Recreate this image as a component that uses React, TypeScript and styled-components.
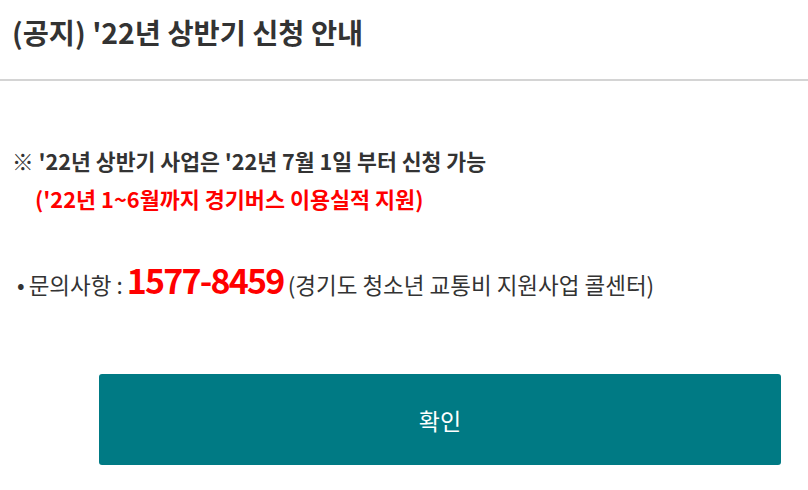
import React from "react";
import styled, { createGlobalStyle } from "styled-components";

const Global = createGlobalStyle`
  html, body { margin: 0; padding: 0; background: #fff; }
  body { font-family: "Noto Sans CJK KR", "Noto Sans", sans-serif; color: #333; }
`;

const Page = styled.div`
  width: 808px;
  height: 490px;
  display: flex;
  flex-direction: column;
`;

const Header = styled.header`
  height: 81px;
  padding: 0 12px;
  display: flex;
  align-items: flex-start;
  border-bottom: 2px solid #d4d4d4;
  box-sizing: border-box;
`;

const Title = styled.h1`
  margin: 12px 0 0;
  font-size: 28.4px;
  font-weight: 700;
  line-height: 40px;
  color: #333;
`;

const Body = styled.div`
  padding: 65px 12px 0;
  display: flex;
  flex-direction: column;
`;

const Notice = styled.p`
  margin: 0;
  font-size: 21.6px;
  font-weight: 700;
  line-height: 30px;
  color: #333;
`;

const Sub = styled.p`
  margin: 8px 0 0 23px;
  font-size: 21.8px;
  font-weight: 700;
  line-height: 30px;
  color: #ff0000;
`;

const Contact = styled.div`
  margin-top: 41px;
  display: flex;
  align-items: baseline;
  font-size: 22.5px;
  color: #333;
  white-space: nowrap;
`;

const Bullet = styled.span`
  margin: 0 4px 0 5px;
`;

const Phone = styled.strong`
  font-size: 34px;
  font-weight: 700;
  color: #ff0000;
  letter-spacing: -1.8px;
  margin: 0 4px 0 4px;
`;

const Footer = styled.div`
  margin-top: auto;
  padding: 0 27px 25px 99px;
  display: flex;
`;

const ConfirmButton = styled.button`
  flex: 1;
  height: 91px;
  border: none;
  border-radius: 3px;
  background: #007a84;
  color: #fff;
  font-family: "Noto Sans CJK KR", sans-serif;
  font-size: 23px;
  cursor: pointer;
`;

export default function App() {
  return (
    <Page>
      <Global />
      <Header>
        <Title>(공지) '22년 상반기 신청 안내</Title>
      </Header>
      <Body>
        <Notice>※ '22년 상반기 사업은 '22년 7월 1일 부터 신청 가능</Notice>
        <Sub>('22년 1~6월까지 경기버스 이용실적 지원)</Sub>
        <Contact>
          <Bullet>•</Bullet>
          문의사항 :
          <Phone>1577-8459</Phone>
          (경기도 청소년 교통비 지원사업 콜센터)
        </Contact>
      </Body>
      <Footer>
        <ConfirmButton>확인</ConfirmButton>
      </Footer>
    </Page>
  );
}
